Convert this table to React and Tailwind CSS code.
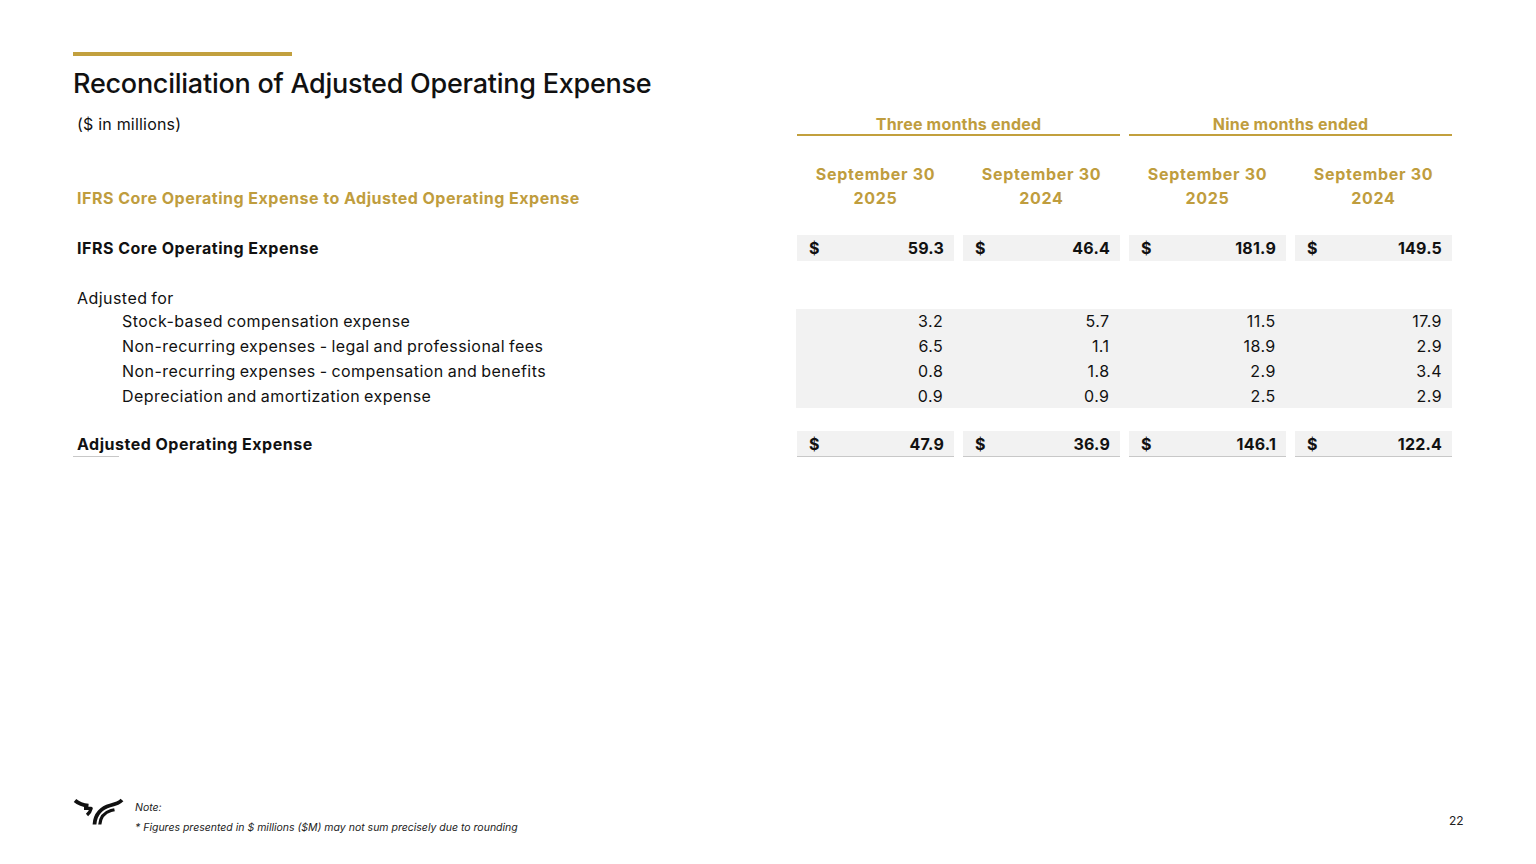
import React from "react";

const gold = "text-[#bf9d3e]";

const rows = [
  ["Stock-based compensation expense", "3.2", "5.7", "11.5", "17.9"],
  ["Non-recurring expenses - legal and professional fees", "6.5", "1.1", "18.9", "2.9"],
  ["Non-recurring expenses - compensation and benefits", "0.8", "1.8", "2.9", "3.4"],
  ["Depreciation and amortization expense", "0.9", "0.9", "2.5", "2.9"],
];

function Logo() {
  return (
    <svg width="52" height="30" viewBox="0 0 52 30" fill="none" stroke="#111" strokeLinecap="butt">
      {/* left horn */}
      <path d="M3 3.5 C7 7 11 8.2 16.5 8.6" strokeWidth="3.8" />
      <path d="M12 11.4 L19.2 11.4 Q18.5 14.8 15 18" strokeWidth="3.2" strokeLinejoin="round" />
      {/* right horn */}
      <path d="M22.5 27.5 C23 17 30 10.5 38 8.5 C43 7.3 47 6.3 50 3" strokeWidth="3.8" />
      <path d="M27.8 27.5 C28.3 20.5 32.5 15.5 39 13.5 L42.5 12.8" strokeWidth="3.2" />
    </svg>
  );
}

function MoneyCell({ value, total }) {
  return (
    <div
      className={`flex items-center justify-between h-[26px] bg-[#f2f2f2] pl-3 pr-[10px] font-bold tracking-[0.2px] ${
        total ? "border-b border-[#c8c8c8]" : ""
      }`}
    >
      <span>$</span>
      <span>{value}</span>
    </div>
  );
}

export default function App() {
  return (
    <div
      className="relative w-[1536px] h-[864px] bg-white text-[#111] overflow-hidden"
      style={{ fontFamily: "Inter, 'Noto Sans', sans-serif" }}
    >
      <div className="pl-[73px] pr-[84px] pt-[52px]">
        {/* Heading */}
        <div className="w-[219px] h-[4px] bg-[#c2a03e]" />
        <h1 className="mt-[12px] text-[27px] leading-[32px] font-medium tracking-[-0.25px]">
          Reconciliation of Adjusted Operating Expense
        </h1>

        {/* Table */}
        <div className="grid grid-cols-[1fr_157px_157px_157px_157px] gap-x-[9px] text-[16px] tracking-[0.45px] [word-spacing:-1px] mt-[9px]">
          {/* period header */}
          <div className="pl-1 h-[28px] flex items-center text-[16px] tracking-[0.2px] [word-spacing:0px] pt-[2px]">($ in millions)</div>
          <div className={`col-span-2 h-[27px] flex items-center justify-center font-bold tracking-[0.2px] [word-spacing:0px] ${gold} border-b-2 border-[#c2a03e] pt-[4px]`}>
            Three months ended
          </div>
          <div className={`col-span-2 h-[27px] flex items-center justify-center font-bold tracking-[0.2px] [word-spacing:0px] ${gold} border-b-2 border-[#c2a03e] pt-[4px]`}>
            Nine months ended
          </div>

          {/* date header */}
          <div className={`pl-1 flex items-end font-bold tracking-[0.5px] [word-spacing:0px] ${gold} pt-[25px] leading-[24px]`}>
            IFRS Core Operating Expense to Adjusted Operating Expense
          </div>
          {["2025", "2024", "2025", "2024"].map((y, i) => (
            <div key={i} className={`text-center font-bold tracking-[0.7px] [word-spacing:0px] ${gold} pt-[25px] leading-[24px]`}>
              <div>September 30</div>
              <div>{y}</div>
            </div>
          ))}

          {/* IFRS core */}
          <div className="pl-1 mt-[25px] h-[26px] flex items-center font-bold tracking-[0.5px] [word-spacing:0px]">IFRS Core Operating Expense</div>
          {["59.3", "46.4", "181.9", "149.5"].map((v, i) => (
            <div key={i} className="mt-[25px]">
              <MoneyCell value={v} />
            </div>
          ))}

          {/* Adjusted for */}
          <div className="col-span-5 pl-1 mt-[26px] h-[22px] flex items-center">Adjusted for</div>
        </div>

        {/* Adjustment rows - continuous grey block */}
        <div className="grid grid-cols-[1fr_656px] text-[16px] tracking-[0.45px] [word-spacing:-1px]">
          <div>
            {rows.map((r) => (
              <div key={r[0]} className="pl-[49px] h-[24.75px] flex items-center">
                {r[0]}
              </div>
            ))}
          </div>
          <div className="bg-[#f2f2f2] grid grid-cols-4 gap-x-[9px]">
            {rows.map((r) =>
              r.slice(1).map((v, i) => (
                <div key={r[0] + i} className="h-[24.75px] flex items-center justify-end pr-[10px]">
                  {v}
                </div>
              ))
            )}
          </div>
        </div>

        {/* Total */}
        <div className="grid grid-cols-[1fr_157px_157px_157px_157px] gap-x-[9px] text-[16px] mt-[23px]">
          <div className="h-[26px] flex items-center relative">
            <span className="pl-1 font-bold tracking-[0.5px]">Adjusted Operating Expense</span>
            <span className="absolute left-0 bottom-0 w-[46px] h-px bg-[#c8c8c8]" />
          </div>
          {["47.9", "36.9", "146.1", "122.4"].map((v, i) => (
            <MoneyCell key={i} value={v} total />
          ))}
        </div>
      </div>

      {/* Footer */}
      <div className="absolute left-[72px] top-[797px]">
        <Logo />
      </div>
      <div className="absolute left-[135px] top-[800px] italic text-[10.5px] text-[#222] leading-[16px]">
        <div>Note:</div>
        <div className="mt-[4px]">
          * Figures presented in $ millions ($M) may not sum precisely due to rounding
        </div>
      </div>
      <div className="absolute left-[1449px] top-[812px] text-[12px] text-[#222]">22</div>
    </div>
  );
}
